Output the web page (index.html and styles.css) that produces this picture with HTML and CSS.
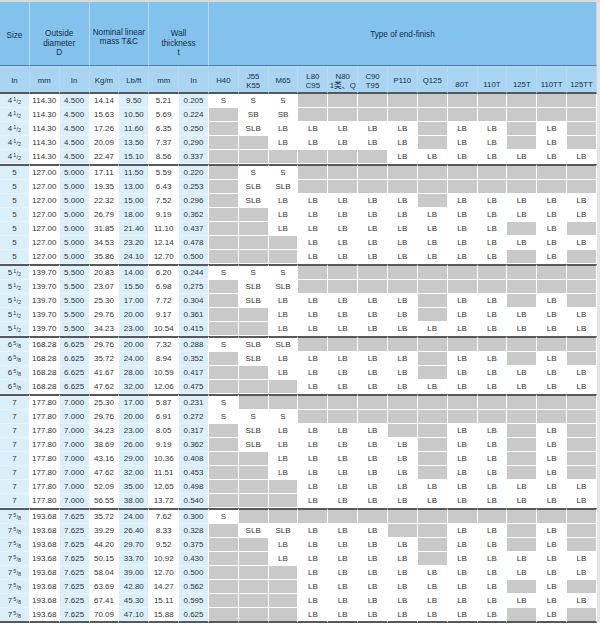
FILE: index.html
```
<!DOCTYPE html>
<html>
<head>
<meta charset="utf-8">
<link rel="stylesheet" href="styles.css">
</head>
<body>
<div class="wrap">
<table class="spec">
<thead>
<tr class="r1">
<td class="mid">Size</td>
<td colspan="2">Outside<br>diameter<br>D</td>
<td colspan="2" class="tight">Nominal linear<br>mass T&amp;C</td>
<td colspan="2">Wall<br>thickness<br>t</td>
<td colspan="13" class="mid2">Type of end-finish</td>
</tr>
<tr class="r2">
<td>In</td><td>mm</td><td>In</td><td>Kg/m</td><td>Lb/ft</td><td>mm</td><td>In</td>
<td>H40</td><td>J55<br>K55</td><td>M65</td><td>L80<br>C95</td><td>N80<br>1类、Q</td><td>C90<br>T95</td><td>P110</td><td>Q125</td>
<td class="lo">80T</td><td class="lo">110T</td><td class="lo">125T</td><td class="lo">110TT</td><td class="lo">125TT</td>
</tr>
</thead>
<tbody>
<!-- 4 1/2 -->
<tr><td>4<span class="fr"><sup>1</sup>/<sub>2</sub></span></td><td>114.30</td><td>4.500</td><td>14.14</td><td>9.50</td><td>5.21</td><td>0.205</td><td>S</td><td>S</td><td>S</td><td class="g"></td><td class="g"></td><td class="g"></td><td class="g"></td><td class="g"></td><td class="g"></td><td class="g"></td><td class="g"></td><td class="g"></td><td class="g"></td></tr>
<tr><td>4<span class="fr"><sup>1</sup>/<sub>2</sub></span></td><td>114.30</td><td>4.500</td><td>15.63</td><td>10.50</td><td>5.69</td><td>0.224</td><td class="g"></td><td>SB</td><td>SB</td><td class="g"></td><td class="g"></td><td class="g"></td><td class="g"></td><td class="g"></td><td class="g"></td><td class="g"></td><td class="g"></td><td class="g"></td><td class="g"></td></tr>
<tr><td>4<span class="fr"><sup>1</sup>/<sub>2</sub></span></td><td>114.30</td><td>4.500</td><td>17.26</td><td>11.60</td><td>6.35</td><td>0.250</td><td class="g"></td><td>SLB</td><td>LB</td><td>LB</td><td>LB</td><td>LB</td><td>LB</td><td class="g"></td><td>LB</td><td>LB</td><td class="g"></td><td>LB</td><td class="g"></td></tr>
<tr><td>4<span class="fr"><sup>1</sup>/<sub>2</sub></span></td><td>114.30</td><td>4.500</td><td>20.09</td><td>13.50</td><td>7.37</td><td>0.290</td><td class="g"></td><td class="g"></td><td>LB</td><td>LB</td><td>LB</td><td>LB</td><td>LB</td><td class="g"></td><td>LB</td><td>LB</td><td class="g"></td><td>LB</td><td class="g"></td></tr>
<tr><td>4<span class="fr"><sup>1</sup>/<sub>2</sub></span></td><td>114.30</td><td>4.500</td><td>22.47</td><td>15.10</td><td>8.56</td><td>0.337</td><td class="g"></td><td class="g"></td><td class="g"></td><td class="g"></td><td class="g"></td><td class="g"></td><td>LB</td><td>LB</td><td>LB</td><td>LB</td><td>LB</td><td>LB</td><td>LB</td></tr>
<!-- 5 -->
<tr class="top"><td>5</td><td>127.00</td><td>5.000</td><td>17.11</td><td>11.50</td><td>5.59</td><td>0.220</td><td class="g"></td><td>S</td><td>S</td><td class="g"></td><td class="g"></td><td class="g"></td><td class="g"></td><td class="g"></td><td class="g"></td><td class="g"></td><td class="g"></td><td class="g"></td><td class="g"></td></tr>
<tr><td>5</td><td>127.00</td><td>5.000</td><td>19.35</td><td>13.00</td><td>6.43</td><td>0.253</td><td class="g"></td><td>SLB</td><td>SLB</td><td class="g"></td><td class="g"></td><td class="g"></td><td class="g"></td><td class="g"></td><td class="g"></td><td class="g"></td><td class="g"></td><td class="g"></td><td class="g"></td></tr>
<tr><td>5</td><td>127.00</td><td>5.000</td><td>22.32</td><td>15.00</td><td>7.52</td><td>0.296</td><td class="g"></td><td>SLB</td><td>LB</td><td>LB</td><td>LB</td><td>LB</td><td>LB</td><td class="g"></td><td>LB</td><td>LB</td><td>LB</td><td>LB</td><td>LB</td></tr>
<tr><td>5</td><td>127.00</td><td>5.000</td><td>26.79</td><td>18.00</td><td>9.19</td><td>0.362</td><td class="g"></td><td class="g"></td><td>LB</td><td>LB</td><td>LB</td><td>LB</td><td>LB</td><td>LB</td><td>LB</td><td>LB</td><td>LB</td><td>LB</td><td>LB</td></tr>
<tr><td>5</td><td>127.00</td><td>5.000</td><td>31.85</td><td>21.40</td><td>11.10</td><td>0.437</td><td class="g"></td><td class="g"></td><td>LB</td><td>LB</td><td>LB</td><td>LB</td><td>LB</td><td>LB</td><td>LB</td><td>LB</td><td class="g"></td><td>LB</td><td class="g"></td></tr>
<tr><td>5</td><td>127.00</td><td>5.000</td><td>34.53</td><td>23.20</td><td>12.14</td><td>0.478</td><td class="g"></td><td class="g"></td><td class="g"></td><td>LB</td><td>LB</td><td>LB</td><td>LB</td><td>LB</td><td>LB</td><td>LB</td><td>LB</td><td>LB</td><td>LB</td></tr>
<tr><td>5</td><td>127.00</td><td>5.000</td><td>35.86</td><td>24.10</td><td>12.70</td><td>0.500</td><td class="g"></td><td class="g"></td><td class="g"></td><td>LB</td><td>LB</td><td>LB</td><td>LB</td><td>LB</td><td>LB</td><td>LB</td><td class="g"></td><td>LB</td><td class="g"></td></tr>
<!-- 5 1/2 -->
<tr class="top"><td>5<span class="fr"><sup>1</sup>/<sub>2</sub></span></td><td>139.70</td><td>5.500</td><td>20.83</td><td>14.00</td><td>6.20</td><td>0.244</td><td>S</td><td>S</td><td>S</td><td class="g"></td><td class="g"></td><td class="g"></td><td class="g"></td><td class="g"></td><td class="g"></td><td class="g"></td><td class="g"></td><td class="g"></td><td class="g"></td></tr>
<tr><td>5<span class="fr"><sup>1</sup>/<sub>2</sub></span></td><td>139.70</td><td>5.500</td><td>23.07</td><td>15.50</td><td>6.98</td><td>0.275</td><td class="g"></td><td>SLB</td><td>SLB</td><td class="g"></td><td class="g"></td><td class="g"></td><td class="g"></td><td class="g"></td><td class="g"></td><td class="g"></td><td class="g"></td><td class="g"></td><td class="g"></td></tr>
<tr><td>5<span class="fr"><sup>1</sup>/<sub>2</sub></span></td><td>139.70</td><td>5.500</td><td>25.30</td><td>17.00</td><td>7.72</td><td>0.304</td><td class="g"></td><td>SLB</td><td>LB</td><td>LB</td><td>LB</td><td>LB</td><td>LB</td><td class="g"></td><td>LB</td><td>LB</td><td class="g"></td><td>LB</td><td class="g"></td></tr>
<tr><td>5<span class="fr"><sup>1</sup>/<sub>2</sub></span></td><td>139.70</td><td>5.500</td><td>29.76</td><td>20.00</td><td>9.17</td><td>0.361</td><td class="g"></td><td class="g"></td><td>LB</td><td>LB</td><td>LB</td><td>LB</td><td>LB</td><td class="g"></td><td>LB</td><td>LB</td><td>LB</td><td>LB</td><td>LB</td></tr>
<tr><td>5<span class="fr"><sup>1</sup>/<sub>2</sub></span></td><td>139.70</td><td>5.500</td><td>34.23</td><td>23.00</td><td>10.54</td><td>0.415</td><td class="g"></td><td class="g"></td><td>LB</td><td>LB</td><td>LB</td><td>LB</td><td>LB</td><td>LB</td><td>LB</td><td>LB</td><td>LB</td><td>LB</td><td>LB</td></tr>
<!-- 6 5/8 -->
<tr class="top"><td>6<span class="fr"><sup>5</sup>/<sub>8</sub></span></td><td>168.28</td><td>6.625</td><td>29.76</td><td>20.00</td><td>7.32</td><td>0.288</td><td>S</td><td>SLB</td><td>SLB</td><td class="g"></td><td class="g"></td><td class="g"></td><td class="g"></td><td class="g"></td><td class="g"></td><td class="g"></td><td class="g"></td><td class="g"></td><td class="g"></td></tr>
<tr><td>6<span class="fr"><sup>5</sup>/<sub>8</sub></span></td><td>168.28</td><td>6.625</td><td>35.72</td><td>24.00</td><td>8.94</td><td>0.352</td><td class="g"></td><td>SLB</td><td>LB</td><td>LB</td><td>LB</td><td>LB</td><td>LB</td><td class="g"></td><td>LB</td><td>LB</td><td class="g"></td><td>LB</td><td class="g"></td></tr>
<tr><td>6<span class="fr"><sup>5</sup>/<sub>8</sub></span></td><td>168.28</td><td>6.625</td><td>41.67</td><td>28.00</td><td>10.59</td><td>0.417</td><td class="g"></td><td class="g"></td><td>LB</td><td>LB</td><td>LB</td><td>LB</td><td>LB</td><td class="g"></td><td>LB</td><td>LB</td><td>LB</td><td>LB</td><td>LB</td></tr>
<tr><td>6<span class="fr"><sup>5</sup>/<sub>8</sub></span></td><td>168.28</td><td>6.625</td><td>47.62</td><td>32.00</td><td>12.06</td><td>0.475</td><td class="g"></td><td class="g"></td><td class="g"></td><td>LB</td><td>LB</td><td>LB</td><td>LB</td><td>LB</td><td>LB</td><td>LB</td><td>LB</td><td>LB</td><td>LB</td></tr>
<!-- 7 -->
<tr class="top"><td>7</td><td>177.80</td><td>7.000</td><td>25.30</td><td>17.00</td><td>5.87</td><td>0.231</td><td>S</td><td class="g"></td><td class="g"></td><td class="g"></td><td class="g"></td><td class="g"></td><td class="g"></td><td class="g"></td><td class="g"></td><td class="g"></td><td class="g"></td><td class="g"></td><td class="g"></td></tr>
<tr><td>7</td><td>177.80</td><td>7.000</td><td>29.76</td><td>20.00</td><td>6.91</td><td>0.272</td><td>S</td><td>S</td><td>S</td><td class="g"></td><td class="g"></td><td class="g"></td><td class="g"></td><td class="g"></td><td class="g"></td><td class="g"></td><td class="g"></td><td class="g"></td><td class="g"></td></tr>
<tr><td>7</td><td>177.80</td><td>7.000</td><td>34.23</td><td>23.00</td><td>8.05</td><td>0.317</td><td class="g"></td><td>SLB</td><td>LB</td><td>LB</td><td>LB</td><td>LB</td><td class="g"></td><td class="g"></td><td>LB</td><td>LB</td><td class="g"></td><td>LB</td><td class="g"></td></tr>
<tr><td>7</td><td>177.80</td><td>7.000</td><td>38.69</td><td>26.00</td><td>9.19</td><td>0.362</td><td class="g"></td><td>SLB</td><td>LB</td><td>LB</td><td>LB</td><td>LB</td><td>LB</td><td class="g"></td><td>LB</td><td>LB</td><td class="g"></td><td>LB</td><td class="g"></td></tr>
<tr><td>7</td><td>177.80</td><td>7.000</td><td>43.16</td><td>29.00</td><td>10.36</td><td>0.408</td><td class="g"></td><td class="g"></td><td>LB</td><td>LB</td><td>LB</td><td>LB</td><td>LB</td><td class="g"></td><td>LB</td><td>LB</td><td class="g"></td><td>LB</td><td class="g"></td></tr>
<tr><td>7</td><td>177.80</td><td>7.000</td><td>47.62</td><td>32.00</td><td>11.51</td><td>0.453</td><td class="g"></td><td class="g"></td><td>LB</td><td>LB</td><td>LB</td><td>LB</td><td>LB</td><td class="g"></td><td>LB</td><td>LB</td><td class="g"></td><td>LB</td><td class="g"></td></tr>
<tr><td>7</td><td>177.80</td><td>7.000</td><td>52.09</td><td>35.00</td><td>12.65</td><td>0.498</td><td class="g"></td><td class="g"></td><td class="g"></td><td>LB</td><td>LB</td><td>LB</td><td>LB</td><td>LB</td><td>LB</td><td>LB</td><td>LB</td><td>LB</td><td>LB</td></tr>
<tr><td>7</td><td>177.80</td><td>7.000</td><td>56.55</td><td>38.00</td><td>13.72</td><td>0.540</td><td class="g"></td><td class="g"></td><td class="g"></td><td>LB</td><td>LB</td><td>LB</td><td>LB</td><td>LB</td><td>LB</td><td>LB</td><td>LB</td><td>LB</td><td>LB</td></tr>
<!-- 7 5/8 -->
<tr class="top"><td>7<span class="fr"><sup>5</sup>/<sub>8</sub></span></td><td>193.68</td><td>7.625</td><td>35.72</td><td>24.00</td><td>7.62</td><td>0.300</td><td>S</td><td class="g"></td><td class="g"></td><td class="g"></td><td class="g"></td><td class="g"></td><td class="g"></td><td class="g"></td><td class="g"></td><td class="g"></td><td class="g"></td><td class="g"></td><td class="g"></td></tr>
<tr><td>7<span class="fr"><sup>5</sup>/<sub>8</sub></span></td><td>193.68</td><td>7.625</td><td>39.29</td><td>26.40</td><td>8.33</td><td>0.328</td><td class="g"></td><td>SLB</td><td>SLB</td><td>LB</td><td>LB</td><td>LB</td><td class="g"></td><td class="g"></td><td>LB</td><td>LB</td><td class="g"></td><td>LB</td><td class="g"></td></tr>
<tr><td>7<span class="fr"><sup>5</sup>/<sub>8</sub></span></td><td>193.68</td><td>7.625</td><td>44.20</td><td>29.70</td><td>9.52</td><td>0.375</td><td class="g"></td><td class="g"></td><td>LB</td><td>LB</td><td>LB</td><td>LB</td><td>LB</td><td class="g"></td><td>LB</td><td>LB</td><td class="g"></td><td>LB</td><td class="g"></td></tr>
<tr><td>7<span class="fr"><sup>5</sup>/<sub>8</sub></span></td><td>193.68</td><td>7.625</td><td>50.15</td><td>33.70</td><td>10.92</td><td>0.430</td><td class="g"></td><td class="g"></td><td>LB</td><td>LB</td><td>LB</td><td>LB</td><td>LB</td><td class="g"></td><td>LB</td><td>LB</td><td>LB</td><td>LB</td><td>LB</td></tr>
<tr><td>7<span class="fr"><sup>5</sup>/<sub>8</sub></span></td><td>193.68</td><td>7.625</td><td>58.04</td><td>39.00</td><td>12.70</td><td>0.500</td><td class="g"></td><td class="g"></td><td class="g"></td><td>LB</td><td>LB</td><td>LB</td><td>LB</td><td>LB</td><td>LB</td><td>LB</td><td>LB</td><td>LB</td><td>LB</td></tr>
<tr><td>7<span class="fr"><sup>5</sup>/<sub>8</sub></span></td><td>193.68</td><td>7.625</td><td>63.69</td><td>42.80</td><td>14.27</td><td>0.562</td><td class="g"></td><td class="g"></td><td class="g"></td><td>LB</td><td>LB</td><td>LB</td><td>LB</td><td>LB</td><td>LB</td><td>LB</td><td class="g"></td><td>LB</td><td class="g"></td></tr>
<tr><td>7<span class="fr"><sup>5</sup>/<sub>8</sub></span></td><td>193.68</td><td>7.625</td><td>67.41</td><td>45.30</td><td>15.11</td><td>0.595</td><td class="g"></td><td class="g"></td><td class="g"></td><td>LB</td><td>LB</td><td>LB</td><td>LB</td><td>LB</td><td>LB</td><td>LB</td><td>LB</td><td>LB</td><td>LB</td></tr>
<tr class="last"><td>7<span class="fr"><sup>5</sup>/<sub>8</sub></span></td><td>193.68</td><td>7.625</td><td>70.09</td><td>47.10</td><td>15.88</td><td>0.625</td><td class="g"></td><td class="g"></td><td class="g"></td><td>LB</td><td>LB</td><td>LB</td><td>LB</td><td>LB</td><td>LB</td><td>LB</td><td class="g"></td><td>LB</td><td class="g"></td></tr>
</tbody>
</table>
</div>
</body>
</html>
```
FILE: styles.css
```
html, body {
  margin: 0;
  padding: 0;
  background: #ffffff;
}
body {
  border-top: 2px solid #dcdcd4;
  width: 600px;
  overflow: hidden;
}
.wrap {
  width: 597px;
  border-right: 3px solid #e4e4e4;
}
.spec {
  width: 597px;
  table-layout: fixed;
  border-collapse: separate;
  border-spacing: 0;
  font-family: "Liberation Sans", Arial, "Noto Sans CJK SC", sans-serif;
}
.spec td {
  padding: 0;
  text-align: center;
  white-space: nowrap;
  overflow: hidden;
}
.spec thead td {
  background: #83c2ec;
  color: #1b2c45;
  font-size: 8.2px;
  border-right: 1px solid #b6daf3;
}
.spec thead .r1 td {
  vertical-align: top;
  padding-top: 27px;
  height: 36px;
  line-height: 9.5px;
  border-bottom: 1px solid #4f80aa;
}
.spec thead .r1 td.tight {
  line-height: 8.5px;
}
.spec thead .r1 td.mid {
  padding-top: 29px;
  height: 34px;
}
.spec thead .r1 td.mid2 {
  padding-top: 28px;
  height: 35px;
}
.spec thead .r2 td {
  background: #a9d5f3;
  vertical-align: middle;
  padding-top: 5px;
  height: 21px;
  line-height: 8.2px;
  font-size: 7.8px;
  border-bottom: 2px solid #575757;
}
.spec thead .r2 td.lo {
  padding-top: 13px;
  height: 13px;
}
.spec tbody td {
  height: 13px;
  line-height: 13px;
  font-size: 8px;
  color: #343434;
  vertical-align: middle;
  border-right: 1px solid #ffffff;
  border-bottom: 1px solid #ffffff;
}
.spec tbody td:nth-child(1),
.spec tbody td:nth-child(3),
.spec tbody td:nth-child(5),
.spec tbody td:nth-child(7) {
  background: #dbeffb;
  border-bottom-color: #e6f4fc;
}
.spec tbody td.g {
  background: #c9c9c9;
}
.spec tbody tr.top td {
  border-top: 2px solid #585858;
}
.spec tbody tr.last td {
  border-bottom: 2px solid #585858;
}
.fr {
  font-size: 5.5px;
  line-height: 0;
  margin-left: 1px;
}
.fr sup {
  font-size: inherit;
  vertical-align: 2px;
  line-height: 0;
}
.fr sub {
  font-size: inherit;
  vertical-align: -1px;
  line-height: 0;
}
```
